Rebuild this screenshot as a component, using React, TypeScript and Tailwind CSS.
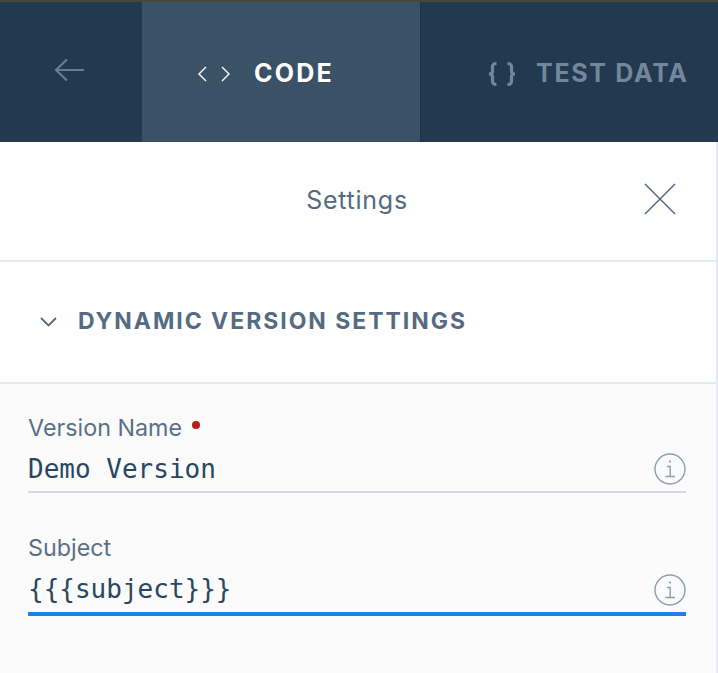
function InfoIcon() {
  return (
    <svg width="32" height="32" viewBox="0 0 32 32" fill="none" stroke="#8a9db0" strokeWidth="1.4" className="shrink-0">
      <circle cx="16" cy="16" r="15" />
      <circle cx="16" cy="8.5" r="1.1" fill="#8a9db0" stroke="none" />
      <path d="M13 13.5h3.2v10M11.5 23.5h9.5" />
    </svg>
  );
}

interface FieldProps {
  label: string;
  value: string;
  required?: boolean;
  focused?: boolean;
}

function Field({ label, value, required, focused }: FieldProps) {
  return (
    <div>
      <div className="flex items-center h-[30px] text-[23.3px] leading-[30px] text-[#5b7088]">
        {label}
        {required && <span className="ml-[10px] mb-[7px] w-2 h-2 rounded-full bg-[#b81c1c]" />}
      </div>
      <div
        className={
          focused
            ? "flex items-center justify-between h-[53px] pt-[4px] border-b-[4px] border-[#1a82e2]"
            : "flex items-center justify-between h-[50px] pt-[4px] border-b-2 border-[#d5dae3]"
        }
      >
        <span className="text-[26px] text-[#294661]" style={{ fontFamily: '"DejaVu Sans Mono", monospace' }}>
          {value}
        </span>
        <InfoIcon />
      </div>
    </div>
  );
}

export default function App() {
  return (
    <div className="w-[718px] h-[673px] overflow-hidden flex flex-col bg-white" style={{ fontFamily: "Inter, sans-serif" }}>
      <div className="h-[2px] bg-[#47463f]" />
      <header className="flex h-[140px] bg-[#22394f] font-bold tracking-[0.09em] text-[25px]">
        <div className="w-[142px] flex items-center justify-center pb-[5px] pr-[3px]">
          <svg width="31" height="24" viewBox="0 0 31 24" fill="none" stroke="#687d92" strokeWidth="2.2">
            <path d="M30 12H2M13 1.5L2 12l11 10.5" />
          </svg>
        </div>
        <div className="w-[279px] flex items-center bg-[#3b5166] border-r border-[#1e3347] text-white pl-[56px] gap-[24px] pt-[3px]">
          <svg width="32" height="16" viewBox="0 0 32 16" fill="none" stroke="#fff" strokeWidth="1.4">
            <path d="M8 1L1 8l7 7M24 1l7 7-7 7" />
          </svg>
          <span>CODE</span>
        </div>
        <div className="flex-1 flex items-center text-[#72879b] pl-[66px] gap-[19px] whitespace-nowrap pt-[3px]">
          <svg width="30" height="26" viewBox="0 0 30 26" fill="none" stroke="#72879b" strokeWidth="3.2">
            <path d="M9.5 2.5C6 2.5 5.5 3.5 5.5 6v4.5c0 1.6-1 2.5-3.5 2.5 2.5 0 3.500.9 3.500 2.500V20c0 2.500.5 3.500 4 3.500M20.500 2.500c3.500 0 4 1 4 3.500v4.500c0 1.600 1 2.500 3.500 2.500-2.500 0-3.500.9-3.500 2.500V20c0 2.500-.5 3.500-4 3.500" />
          </svg>
          <span className="tracking-[0.068em]">TEST DATA</span>
        </div>
      </header>
      <div className="flex-1 flex flex-col border-r-2 border-[#e6eaf0]">
        <div className="relative h-[120px] flex items-center justify-center border-b-2 border-[#e6e9ee] text-[25px] tracking-[0.03em] text-[#546b82]">
          <span className="pr-[2px]">Settings</span>
          <svg width="32" height="32" viewBox="0 0 32 32" fill="none" stroke="#546b82" strokeWidth="1.5" className="absolute right-[40px] top-[41px]">
            <path d="M1 1l30 30M31 1L1 31" />
          </svg>
        </div>
        <div className="h-[122px] flex items-center pl-[40px] gap-[21px] border-b-2 border-[#e6e9ee]">
          <svg width="17" height="10" viewBox="0 0 17 10" fill="none" stroke="#546b82" strokeWidth="1.8">
            <path d="M1 1l7.5 7.5L16 1" />
          </svg>
          <span className="font-bold text-[23px] tracking-[0.085em] text-[#546b82] pb-[2px]">DYNAMIC VERSION SETTINGS</span>
        </div>
        <div className="flex-1 bg-[#fbfbfb] pl-[28px] pt-[29px] pr-[30px] flex flex-col gap-[40px]">
          <Field label="Version Name" value="Demo Version" required />
          <Field label="Subject" value="{{{subject}}}" focused />
        </div>
      </div>
    </div>
  );
}
